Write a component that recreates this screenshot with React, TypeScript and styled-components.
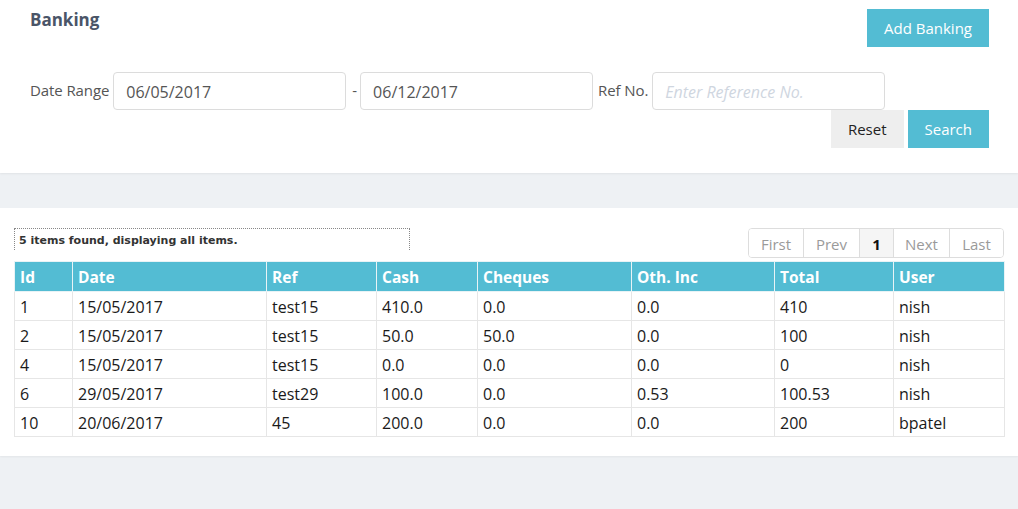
import React from "react";
import styled, { createGlobalStyle } from "styled-components";

const Global = createGlobalStyle`
  html, body { margin: 0; padding: 0; background: #eef1f4; }
  body { font-family: "Open Sans", "Noto Sans", sans-serif; font-size: 15px; color: #333; }
  * { box-sizing: border-box; }
`;

const Page = styled.div`
  width: 1018px;
  min-height: 509px;
  background: #eef1f4;
`;

const TopPanel = styled.section`
  background: #fff;
  padding: 9px 29px 25px 30px;
  box-shadow: 0 1px 2px rgba(0, 0, 0, 0.06);
  height: 173px;
`;

const TitleRow = styled.div`
  display: flex;
  justify-content: space-between;
  align-items: flex-start;
  height: 63px;
`;

const Title = styled.h2`
  margin: 0;
  font-size: 17px;
  font-weight: 700;
  color: #4a5568;
  line-height: 22px;
`;

const Button = styled.button<{ $variant?: "primary" | "default" }>`
  border: none;
  border-radius: 0;
  height: 38px;
  padding: 0 17px;
  font-family: inherit;
  font-size: 15px;
  cursor: pointer;
  background: ${(p) => (p.$variant === "default" ? "#eeeeee" : "#53bcd3")};
  color: ${(p) => (p.$variant === "default" ? "#222" : "#fff")};
`;

const FilterRow = styled.div`
  display: flex;
  align-items: center;
  height: 38px;
`;

const Label = styled.span<{ $before?: number }>`
  color: #555;
  font-size: 15px;
  margin-left: ${(p) => p.$before ?? 0}px;
  margin-right: 4px;
  padding-bottom: 3px;
  letter-spacing: -0.1px;
`;

const Dash = styled.span`
  color: #555;
  margin: 0 3px 0 6px;
  padding-bottom: 3px;
`;

const Input = styled.input`
  width: 233px;
  height: 38px;
  border: 1px solid #dcdcdc;
  border-radius: 4px;
  padding: 1px 12px 0;
  font-family: inherit;
  font-size: 16px;
  color: #555;
  outline: none;
  &::placeholder {
    color: #cfd6df;
    font-style: italic;
  }
`;

const ButtonRow = styled.div`
  display: flex;
  justify-content: flex-end;
  gap: 4px;
`;

const Band = styled.div`
  height: 35px;
`;

const TablePanel = styled.section`
  background: #fff;
  padding: 20px 14px 19px 14px;
  box-shadow: 0 1px 2px rgba(0, 0, 0, 0.05);
`;

const InfoRow = styled.div`
  display: flex;
  justify-content: space-between;
  align-items: flex-start;
  margin-bottom: 3px;
`;

const Info = styled.div`
  width: 396px;
  height: 22px;
  border: 1px dotted #888;
  border-bottom: none;
  padding: 5px 4px 0;
  font-family: "DejaVu Sans", Verdana, sans-serif;
  font-weight: 700;
  font-size: 11px;
  color: #333;
`;

const Pager = styled.div`
  display: flex;
  border: 1px solid #dddddd;
  border-radius: 4px;
  height: 30px;
  overflow: hidden;
`;

const PageItem = styled.span<{ $active?: boolean; $w: number }>`
  display: flex;
  align-items: center;
  justify-content: center;
  width: ${(p) => p.$w}px;
  padding-top: 1px;
  border-left: 1px solid #dddddd;
  &:first-child { border-left: none; }
  color: ${(p) => (p.$active ? "#111" : "#9a9a9a")};
  font-weight: ${(p) => (p.$active ? 700 : 400)};
  background: ${(p) => (p.$active ? "#f5f5f5" : "#fff")};
  font-size: 15px;
`;

const Table = styled.table`
  width: 990px;
  border-collapse: collapse;
  table-layout: fixed;
`;

const Th = styled.th`
  background: #53bcd3;
  color: #fff;
  font-weight: 700;
  text-align: left;
  height: 30px;
  padding: 0 5px;
  font-size: 15.5px;
  border: 1px solid #e8f3f6;
`;

const Td = styled.td`
  height: 29px;
  padding: 1px 5px 0;
  border: 1px solid #e6e6e6;
  font-size: 16px;
  color: #1a1a1a;
`;

const cols = [
  ["Id", 58],
  ["Date", 194],
  ["Ref", 110],
  ["Cash", 101],
  ["Cheques", 154],
  ["Oth. Inc", 143],
  ["Total", 119],
  ["User", 111],
] as const;

const rows = [
  ["1", "15/05/2017", "test15", "410.0", "0.0", "0.0", "410", "nish"],
  ["2", "15/05/2017", "test15", "50.0", "50.0", "0.0", "100", "nish"],
  ["4", "15/05/2017", "test15", "0.0", "0.0", "0.0", "0", "nish"],
  ["6", "29/05/2017", "test29", "100.0", "0.0", "0.53", "100.53", "nish"],
  ["10", "20/06/2017", "45", "200.0", "0.0", "0.0", "200", "bpatel"],
];

const pages: [string, number, boolean][] = [
  ["First", 54, false],
  ["Prev", 56, false],
  ["1", 34, true],
  ["Next", 56, false],
  ["Last", 54, false],
];

export default function App() {
  return (
    <Page>
      <Global />
      <TopPanel>
        <TitleRow>
          <Title>Banking</Title>
          <Button>Add Banking</Button>
        </TitleRow>
        <FilterRow>
          <Label>Date Range</Label>
          <Input defaultValue="06/05/2017" />
          <Dash>-</Dash>
          <Input defaultValue="06/12/2017" />
          <Label $before={5}>Ref No.</Label>
          <Input placeholder="Enter Reference No." />
        </FilterRow>
        <ButtonRow>
          <Button $variant="default">Reset</Button>
          <Button>Search</Button>
        </ButtonRow>
      </TopPanel>
      <Band />
      <TablePanel>
        <InfoRow>
          <Info>5 items found, displaying all items.</Info>
          <Pager>
            {pages.map(([t, w, a]) => (
              <PageItem key={t} $w={w} $active={a}>
                {t}
              </PageItem>
            ))}
          </Pager>
        </InfoRow>
        <Table>
          <colgroup>
            {cols.map(([n, w]) => (
              <col key={n} style={{ width: w }} />
            ))}
          </colgroup>
          <thead>
            <tr>
              {cols.map(([n]) => (
                <Th key={n}>{n}</Th>
              ))}
            </tr>
          </thead>
          <tbody>
            {rows.map((r) => (
              <tr key={r[0]}>
                {r.map((c, i) => (
                  <Td key={i}>{c}</Td>
                ))}
              </tr>
            ))}
          </tbody>
        </Table>
      </TablePanel>
    </Page>
  );
}
